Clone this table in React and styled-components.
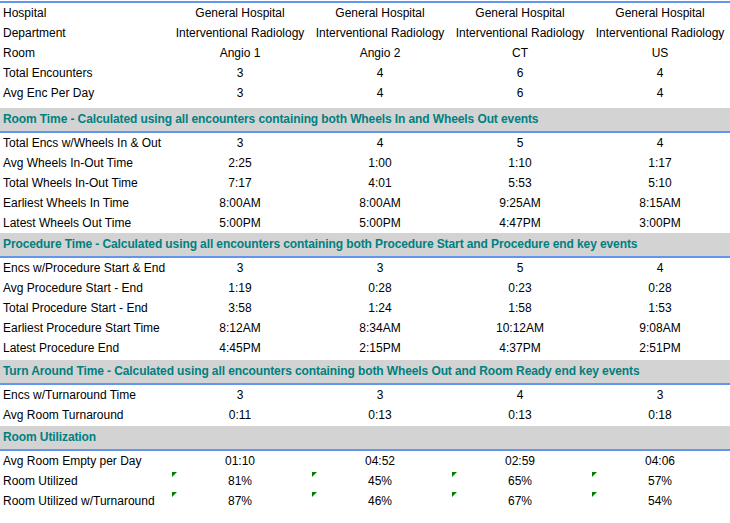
import React from 'react';
import styled, { createGlobalStyle } from 'styled-components';

const GlobalStyle = createGlobalStyle`
  body {
    margin: 0;
    background: #fff;
    font-family: "Liberation Sans", Arial, sans-serif;
    font-size: 12px;
    color: #000;
  }
`;

const sections = [
  {
    title: null,
    tail: 5,
    rows: [
      { label: 'Hospital', values: ['General Hospital', 'General Hospital', 'General Hospital', 'General Hospital'] },
      { label: 'Department', values: ['Interventional Radiology', 'Interventional Radiology', 'Interventional Radiology', 'Interventional Radiology'] },
      { label: 'Room', values: ['Angio 1', 'Angio 2', 'CT', 'US'] },
      { label: 'Total Encounters', values: ['3', '4', '6', '4'] },
      { label: 'Avg Enc Per Day', values: ['3', '4', '6', '4'] },
    ],
  },
  {
    title: 'Room Time - Calculated using all encounters containing both Wheels In and Wheels Out events',
    tail: 0,
    rows: [
      { label: 'Total Encs w/Wheels In & Out', values: ['3', '4', '5', '4'] },
      { label: 'Avg Wheels In-Out Time', values: ['2:25', '1:00', '1:10', '1:17'] },
      { label: 'Total Wheels In-Out Time', values: ['7:17', '4:01', '5:53', '5:10'] },
      { label: 'Earliest Wheels In Time', values: ['8:00AM', '8:00AM', '9:25AM', '8:15AM'] },
      { label: 'Latest Wheels Out Time', values: ['5:00PM', '5:00PM', '4:47PM', '3:00PM'] },
    ],
  },
  {
    title: 'Procedure Time - Calculated using all encounters containing both Procedure Start and Procedure end key events',
    tail: 2,
    rows: [
      { label: 'Encs w/Procedure Start & End', values: ['3', '3', '5', '4'] },
      { label: 'Avg Procedure Start - End', values: ['1:19', '0:28', '0:23', '0:28'] },
      { label: 'Total Procedure Start - End', values: ['3:58', '1:24', '1:58', '1:53'] },
      { label: 'Earliest Procedure Start Time', values: ['8:12AM', '8:34AM', '10:12AM', '9:08AM'] },
      { label: 'Latest Procedure End', values: ['4:45PM', '2:15PM', '4:37PM', '2:51PM'] },
    ],
  },
  {
    title: 'Turn Around Time - Calculated using all encounters containing both Wheels Out and Room Ready end key events',
    tail: 1,
    rows: [
      { label: 'Encs w/Turnaround Time', values: ['3', '3', '4', '3'] },
      { label: 'Avg Room Turnaround', values: ['0:11', '0:13', '0:13', '0:18'] },
    ],
  },
  {
    title: 'Room Utilization',
    tail: 0,
    rows: [
      { label: 'Avg Room Empty per Day', values: ['01:10', '04:52', '02:59', '04:06'] },
      { label: 'Room Utilized', values: ['81%', '45%', '65%', '57%'], flagged: true },
      { label: 'Room Utilized w/Turnaround', values: ['87%', '46%', '67%', '54%'], flagged: true },
    ],
  },
];

function App() {
  return (
    <Sheet>
      <GlobalStyle />
      {sections.map((section, i) => (
        <React.Fragment key={i}>
          {section.title && <Band>{section.title}</Band>}
          <Block $first={i === 0} $tail={section.tail}>
            {section.rows.map((row) => (
              <Row key={row.label}>
                <Label>{row.label}</Label>
                {row.values.map((v, j) => (
                  <Cell key={j}>
                    {row.flagged && <Flag />}
                    {v}
                  </Cell>
                ))}
              </Row>
            ))}
          </Block>
        </React.Fragment>
      ))}
    </Sheet>
  );
}

export default App;

const Sheet = styled.div`
  width: 730px;
  padding-top: 1px;
`;

const Block = styled.div`
  border-top: ${(p) => (p.$first ? '2px solid #6495ed' : 'none')};
  padding-bottom: ${(p) => p.$tail}px;
`;

const Band = styled.div`
  height: 21px;
  line-height: 21px;
  padding: 1px 0 1px 3px;
  background: #d3d3d3;
  border-bottom: 2px solid #6495ed;
  color: #008080;
  font-weight: bold;
  letter-spacing: -0.1px;
  white-space: nowrap;
`;

const Row = styled.div`
  display: grid;
  grid-template-columns: 170px repeat(4, 140px);
  height: 20px;
  line-height: 20px;
`;

const Label = styled.div`
  padding-left: 3px;
  white-space: nowrap;
`;

const Cell = styled.div`
  position: relative;
  text-align: center;
  white-space: nowrap;
`;

const Flag = styled.span`
  position: absolute;
  left: 2px;
  top: 1px;
  width: 0;
  height: 0;
  border-top: 5px solid #008000;
  border-right: 5px solid transparent;
`;
